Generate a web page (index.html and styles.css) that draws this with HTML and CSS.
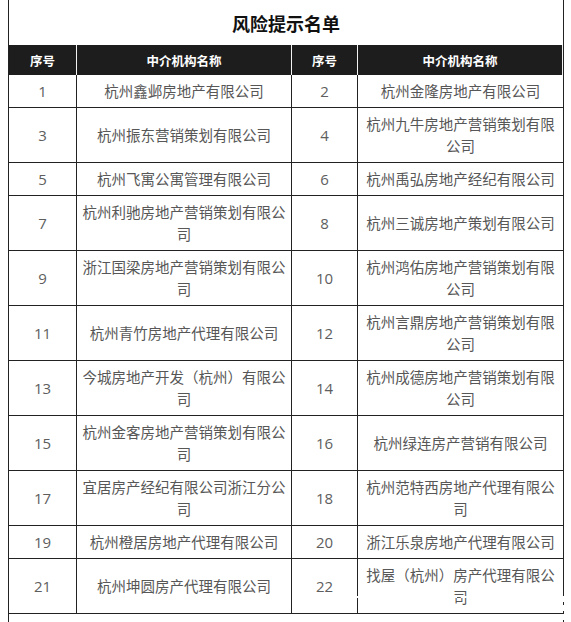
FILE: index.html
```html
<!DOCTYPE html>
<html lang="zh-CN">
<head>
<meta charset="utf-8">
<title>风险提示名单</title>
<link rel="stylesheet" href="styles.css">
</head>
<body>
<div class="sheet">
  <div class="title">风险提示名单</div>
  <table class="list">
    <colgroup>
      <col class="c-no"><col class="c-name"><col class="c-no2"><col class="c-name2">
    </colgroup>
    <thead>
      <tr><th>序号</th><th>中介机构名称</th><th>序号</th><th>中介机构名称</th></tr>
    </thead>
    <tbody>
      <tr><td class="no">1</td><td>杭州鑫邺房地产有限公司</td><td class="no">2</td><td>杭州金隆房地产有限公司</td></tr>
      <tr><td class="no">3</td><td>杭州振东营销策划有限公司</td><td class="no">4</td><td>杭州九牛房地产营销策划有限公司</td></tr>
      <tr><td class="no">5</td><td>杭州飞寓公寓管理有限公司</td><td class="no">6</td><td>杭州禹弘房地产经纪有限公司</td></tr>
      <tr><td class="no">7</td><td>杭州利驰房地产营销策划有限公司</td><td class="no">8</td><td>杭州三诚房地产策划有限公司</td></tr>
      <tr><td class="no">9</td><td>浙江国梁房地产营销策划有限公司</td><td class="no">10</td><td>杭州鸿佑房地产营销策划有限公司</td></tr>
      <tr><td class="no">11</td><td>杭州青竹房地产代理有限公司</td><td class="no">12</td><td>杭州言鼎房地产营销策划有限公司</td></tr>
      <tr><td class="no">13</td><td>今城房地产开发（杭州）有限公司</td><td class="no">14</td><td>杭州成德房地产营销策划有限公司</td></tr>
      <tr><td class="no">15</td><td>杭州金客房地产营销策划有限公司</td><td class="no">16</td><td>杭州绿连房产营销有限公司</td></tr>
      <tr><td class="no">17</td><td>宜居房产经纪有限公司浙江分公司</td><td class="no">18</td><td>杭州范特西房地产代理有限公司</td></tr>
      <tr><td class="no">19</td><td>杭州橙居房地产代理有限公司</td><td class="no">20</td><td>浙江乐泉房地产代理有限公司</td></tr>
      <tr><td class="no">21</td><td>杭州坤圆房产代理有限公司</td><td class="no">22</td><td>找屋（杭州）房产代理有限公司</td></tr>
      <tr class="tail"><td colspan="4"></td></tr>
    </tbody>
  </table>
</div>
<div class="crop-mark"></div>
</body>
</html>
```

FILE: styles.css
```css
html, body {
  margin: 0;
  padding: 0;
  background: #ffffff;
}

body {
  position: relative;
  font-family: "Noto Sans CJK SC", "Noto Sans", sans-serif;
  overflow: hidden;
}

.sheet {
  margin-left: 8px;
  width: 554px;
  min-height: 622px;
  border-left: 1px solid #222;
  border-right: 1px solid #222;
}

.title {
  height: 45px;
  display: flex;
  align-items: center;
  justify-content: center;
  font-size: 18px;
  font-weight: 700;
  color: #111;
}

.list {
  width: 554px;
  table-layout: fixed;
  border-collapse: separate;
  border-spacing: 0;
}

.c-no { width: 68px; }
.c-name { width: 215px; }
.c-no2 { width: 66px; }
.c-name2 { width: 205px; }

.list th,
.list td {
  box-sizing: border-box;
  text-align: center;
}

.list th {
  height: 30px;
  padding: 0;
  background: #1d1d1d;
  color: #fff;
  font-size: 12.5px;
  font-weight: 700;
  border-right: 1px solid #f2f2f2;
}

.list td {
  padding: 5px 4px;
  line-height: 22px;
  font-size: 14.5px;
  color: #575757;
  border-right: 1px solid #222;
  border-bottom: 1px solid #222;
}

.list td:last-child {
  border-right: none;
}

.list td.no {
  font-family: "Open Sans", "Noto Sans", sans-serif;
  font-size: 15px;
  color: #5e5e5e;
}

.list .tail td {
  height: 10px;
  padding: 0;
  border: none;
}

/* white dashed selection mark lying over the bottom-right corner */
.crop-mark {
  position: absolute;
  left: 343px;
  top: 596px;
  width: 218px;
  height: 40px;
  border-top: 2px dashed #fff;
  border-left: 2px dashed rgba(255, 255, 255, 0.9);
  border-right: 2px dashed #fff;
  background: repeating-linear-gradient(90deg, transparent 0 10px, #fff 10px 14px) 0 17px / 100% 1px no-repeat;
}
```
